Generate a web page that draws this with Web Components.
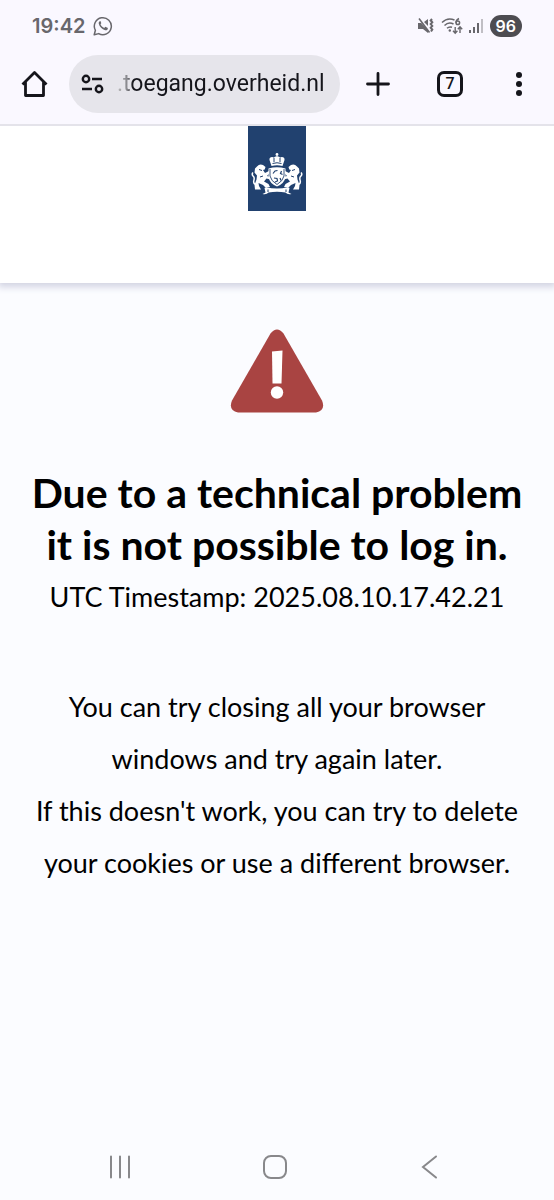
<!DOCTYPE html>
<html lang="en">
<head>
<meta charset="utf-8">
<meta name="viewport" content="width=device-width, initial-scale=1">
<title>Login error</title>
<style>
    body {
        margin: 0;
        min-height: 100vh;
        display: flex;
        flex-direction: column;
        background: #fbfcff;
        color: #000;
        font-family: Lato, "Noto Sans", sans-serif;
    }

    error-message {
        flex: 1;
    }
</style>
</head>
<body>
    <status-bar time="19:42" battery="96"></status-bar>
    <browser-bar tabs="7" address=".toegang.overheid.nl"></browser-bar>
    <site-header></site-header>
    <error-message>
        <span slot="title">Due to a technical problem it is not possible to log in.</span>
        <span slot="timestamp">UTC Timestamp: 2025.08.10.17.42.21</span>
        <span>You can try closing all your browser windows and try again later.<br>If this doesn't work, you can try to delete your cookies or use a different browser.</span>
    </error-message>
    <nav-bar></nav-bar>

<script>
"use strict";

class StatusBar extends HTMLElement {
    constructor(){
        super();
        this.attachShadow({mode : 'open'});
    }

    getStyles(){
        return `
            <style>
                :host{
                    display: flex;
                    align-items: center;
                    height: 51px;
                    padding: 0 32px;
                    background: #faf8ff;
                    color: #68676c;
                    font-family: Inter, Roboto, sans-serif;
                }

                .time{
                    font-size: 20px;
                    font-weight: 600;
                    margin-right: 8px;
                }

                .icons{
                    display: flex;
                    align-items: center;
                    gap: 6px;
                    margin-left: auto;
                }

                .battery{
                    padding: 0 6px;
                    border-radius: 11px;
                    background: #4d4c51;
                    color: #fff;
                    font-size: 16px;
                    font-weight: 600;
                    line-height: 22px;
                }

                svg{
                    display: block;
                }
            </style>
        `;
    }

    connectedCallback(){
        this.shadowRoot.innerHTML = `
            ${this.getStyles()}
            <span class="time">${this.getAttribute("time")}</span>
            <svg width="20" height="20" viewBox="0 0 20 20" fill="none" stroke="currentColor" stroke-width="1.5">
                <path d="M1.2 18.8 2.4 14.3A8.5 8.5 0 1 1 5.7 17.6Z" stroke-linejoin="round"/>
                <path d="M6.8 5.2c-.9.5-1.3 1.4-1 2.6.7 3 3.2 5.6 6.4 6.4 1.3.2 2.3-.4 2.6-1.5.1-.5 0-.7-.3-.9l-1.7-.9c-.4-.2-.7 0-1 .4l-.5.6c-1.8-.7-3.1-2-3.8-3.6l.6-.8c.2-.3.2-.5.1-.8l-.7-1.4c-.1-.2-.4-.3-.7-.1z" fill="currentColor" stroke="none"/>
            </svg>
            <div class="icons">
                <svg width="18" height="18" viewBox="0 0 18 18" fill="none" stroke="currentColor" stroke-width="1.5">
                    <path d="M1 6h3.2L11 12.8V16l-5-4H1zM7 5l4-3v7z" fill="currentColor" stroke="none"/>
                    <path d="M2 1.5 12.5 15.5"/>
                    <path d="M15 2l-1.3 1.5 1.6 1.8-1.6 1.8 1.6 1.8-1.6 1.8 1.6 1.8-1.3 2" stroke-width="2"/>
                </svg>
                <svg width="22" height="18" viewBox="0 0 22 18" fill="none" stroke="currentColor" stroke-width="1.5">
                    <path d="M1 5.5C4.5 2 9.5 1.3 13.5 3M3.5 8.5C6 6 9.5 5.5 12.5 7M6 11.3C7.5 9.9 9.5 9.7 11 10.3"/>
                    <circle cx="8.8" cy="13.5" r="1.2" fill="currentColor" stroke="none"/>
                    <path d="M18 1.5C15.8 2.5 15 4 15 5.7"/>
                    <circle cx="16.8" cy="5.8" r="1.8"/>
                    <path d="M14.2 10v6M12 13.8l2.2 2.4 2.2-2.4M19 16v-6M16.8 12.2 19 9.8l2.2 2.4" stroke-width="1.4"/>
                </svg>
                <svg width="15" height="18" viewBox="0 0 15 18" fill="currentColor">
                    <path d="M0 13h2v3H0zM4 10h2v6H4zM8 6h2v10H8z"/>
                    <path d="M12 2h2v14h-2z" opacity=".4"/>
                </svg>
                <span class="battery">${this.getAttribute("battery")}</span>
            </div>
        `;
    }
}

class BrowserBar extends HTMLElement {
    constructor(){
        super();
        this.attachShadow({mode : 'open'});
    }

    getStyles(){
        return `
            <style>
                :host{
                    display: flex;
                    align-items: center;
                    height: 75px;
                    box-sizing: border-box;
                    padding: 0 25px 8px 20px;
                    border-bottom: 2px solid #e4e3ea;
                    background: #faf8ff;
                    color: #15151b;
                    font-family: Roboto, sans-serif;
                }

                button{
                    display: flex;
                    padding: 0;
                    border: 0;
                    background: none;
                    color: inherit;
                    font: inherit;
                }

                .address{
                    flex: 1;
                    display: flex;
                    align-items: center;
                    gap: 12px;
                    min-width: 0;
                    height: 58px;
                    box-sizing: border-box;
                    margin-left: 20px;
                    padding: 0 10px 0 11px;
                    border-radius: 29px;
                    background: #e6e5eb;
                }

                .address svg{
                    flex: none;
                }

                input{
                    flex: 1;
                    min-width: 0;
                    padding: 0;
                    border: 0;
                    outline: 0;
                    background: linear-gradient(90deg, #bbb 0, #88888d 10px, #15151b 16px);
                    background-clip: text;
                    color: transparent;
                    font-family: Roboto, sans-serif;
                    font-size: 23px;
                    line-height: 32px;
                }

                .actions{
                    display: flex;
                    align-items: center;
                    gap: 46px;
                    margin-left: 25px;
                }

                .tabs{
                    width: 26px;
                    height: 26px;
                    box-sizing: border-box;
                    align-items: center;
                    justify-content: center;
                    border: 3px solid;
                    border-radius: 7px;
                    font-size: 16px;
                    font-weight: 500;
                }
            </style>
        `;
    }

    connectedCallback(){
        this.shadowRoot.innerHTML = `
            ${this.getStyles()}
            <button aria-label="Home">
                <svg width="29" height="28" viewBox="0 0 29 28" fill="none" stroke="currentColor" stroke-width="2.8" stroke-linejoin="round">
                    <path d="M2.5 14.5 14.5 2.5 26.5 14.5M5.5 12v13.5h18V12"/>
                </svg>
            </button>
            <div class="address">
                <svg width="25" height="20" viewBox="0 0 25 20" fill="none" stroke="currentColor" stroke-width="2.4">
                    <circle cx="6" cy="5" r="3.2"/>
                    <path d="M12 5h10M2 15h10"/>
                    <circle cx="19" cy="15" r="3.2"/>
                </svg>
                <input type="text" aria-label="Address" value="${this.getAttribute("address")}">
            </div>
            <div class="actions">
                <button aria-label="New tab">
                    <svg width="26" height="26" viewBox="0 0 26 26" stroke="currentColor" stroke-width="2.8" stroke-linecap="round">
                        <path d="M13 2.5v21M2.5 13h21"/>
                    </svg>
                </button>
                <button class="tabs" aria-label="Open tabs">${this.getAttribute("tabs")}</button>
                <button aria-label="Menu">
                    <svg width="20" height="26" viewBox="0 0 20 26" fill="currentColor">
                        <circle cx="10" cy="4" r="3"/>
                        <circle cx="10" cy="13" r="3"/>
                        <circle cx="10" cy="22" r="3"/>
                    </svg>
                </button>
            </div>
        `;
    }
}

class SiteHeader extends HTMLElement {
    constructor(){
        super();
        this.attachShadow({mode : 'open'});
    }

    connectedCallback(){
        this.shadowRoot.innerHTML = `
            <style>
                :host{
                    display: flex;
                    justify-content: center;
                    padding-bottom: 72px;
                    background: #fff;
                    box-shadow: 0 2px 7px 2px #d2d3e2;
                    clip-path: inset(0 0 -16px 0);
                }

                svg{
                    display: block;
                }
            </style>
            <svg width="58" height="85" viewBox="0 0 58 85" role="img" aria-label="Rijksoverheid">
                <path d="M0 0h58v85H0z" fill="#21416f"/>
                <g fill="#fff">
                    <circle cx="29" cy="28.5" r="1.4"/>
                    <path d="M23.5 40 21.5 34c-.6-2.500 2.700-4 4.500-2.200 1-2 5-2 6 0 1.800-1.800 5.100-.3 4.500 2.200L34.500 40q-5.500-1.500-11 0z"/>
                    <path d="M20.5 42.5q8.500-2.500 17 0V51q-1 6.500-8.500 9.500-7.500-3-8.500-9.500z"/>
                    <path d="M9 40.5q2.500-3 6-1.500l2.500 2-.8 2.500-1.700.5 2 3 4-2 1 1.500-3 3.500 3 1 .5 2.500-4-1-2.500 3 4.500 2.500 1.500 3H17l-2-2-4.500-2 .5 3 2 3.500H7L6.500 59l2-5.500.5-4-2.500-3 .5-4z"/>
                    <path d="M49 40.5q-2.500-3-6-1.500l-2.500 2 .8 2.500 1.700.5-2 3-4-2-1 1.500 3 3.500-3 1-.5 2.500 4-1 2.500 3-4.500 2.500-1.500 3H41l2-2 4.500-2-.5 3-2 3.500h6L51.500 59l-2-5.500-.5-4 2.500-3-.5-4z"/>
                    <path d="M18 61q11 3 22 0l1.500 1-1 4.500 3 1.500q-4 1-6-1.500-8.500-1.500-17 0-2 2.500-6 1.500l3-1.500-1-4.500z"/>
                    <path d="M7.500 58.500C3 57 8 53 5.500 50.500 4 49 3.500 48 5 46.500M50.500 58.500c4.500-1.500-.5-5.500 2-8 1.500-1.500 2-2.500.5-4" fill="none" stroke="#fff" stroke-width="1.5"/>
                </g>
                <g fill="none" stroke="#21416f">
                    <path d="M24.5 37.5q4.500-1.500 9 0M26 32v4M32 32v4"/>
                    <path d="M22 43v7q1 5 7 8.500 6-3.500 7-8.500v-7" stroke-width=".9"/>
                    <path d="M25 47.500l2-2.500 2.500-.5M33.500 45l-1 2.500 2 1M26 52l3 .5.500 2.500-2.500 1M32 52l1 2.500" stroke-width="1.200"/>
                    <path d="M11 43.5l3 1M47 43.5l-3 1M12 51l3-1M46 51l-3-1M20 63.5v2.500M38 63.5v2.500"/>
                </g>
            </svg>
        `;
    }
}

class ErrorMessage extends HTMLElement {
    constructor(){
        super();
        this.attachShadow({mode : 'open'});
    }

    connectedCallback(){
        this.shadowRoot.innerHTML = `
            <style>
                :host{
                    display: block;
                    padding: 46px 24px 0;
                    text-align: center;
                }

                svg{
                    display: block;
                    margin: 0 auto 54px;
                }

                h1{
                    margin: 0;
                    font-size: 41px;
                    font-weight: 700;
                    line-height: 52px;
                }

                p{
                    margin: 0;
                    font-size: 27px;
                    line-height: 52px;
                }

                .timestamp{
                    margin-bottom: 58px;
                }
            </style>
            <svg width="94" height="84" viewBox="0 0 94 84" role="img" aria-label="Warning">
                <path d="M40.500 4.500Q47-3.500 53.500 4.500L92 71.500Q96 81.500 86 83.500H8Q-2 81.500 2 71.500Z" fill="#a94442"/>
                <path d="M42 22.500 52.500 21.500 51.500 54.500H42.500Z" fill="#fff"/>
                <circle cx="47" cy="63.500" r="6.200" fill="#fff"/>
            </svg>
            <h1><slot name="title"></slot></h1>
            <p class="timestamp"><slot name="timestamp"></slot></p>
            <p><slot></slot></p>
        `;
    }
}

class NavBar extends HTMLElement {
    constructor(){
        super();
        this.attachShadow({mode : 'open'});
    }

    connectedCallback(){
        this.shadowRoot.innerHTML = `
            <style>
                :host{
                    display: flex;
                    justify-content: space-around;
                    padding: 20px 46px 20px 42px;
                    color: #88888b;
                }

                button{
                    display: flex;
                    padding: 0;
                    border: 0;
                    background: none;
                    color: inherit;
                }

                svg{
                    fill: none;
                    stroke: currentColor;
                    stroke-width: 2;
                    stroke-linecap: round;
                }
            </style>
            <button aria-label="Recent apps">
                <svg width="26" height="26" viewBox="0 0 26 26"><path d="M4 2.500v21M13 2.500v21M22 2.500v21"/></svg>
            </button>
            <button aria-label="Home">
                <svg width="26" height="26" viewBox="0 0 26 26"><rect x="2" y="2" width="22" height="22" rx="7"/></svg>
            </button>
            <button aria-label="Back">
                <svg width="26" height="26" viewBox="0 0 26 26"><path d="M19 2.500 6 13 19 23.500"/></svg>
            </button>
        `;
    }
}

customElements.define("status-bar", StatusBar);
customElements.define("browser-bar", BrowserBar);
customElements.define("site-header", SiteHeader);
customElements.define("error-message", ErrorMessage);
customElements.define("nav-bar", NavBar);
</script>
</body>
</html>
